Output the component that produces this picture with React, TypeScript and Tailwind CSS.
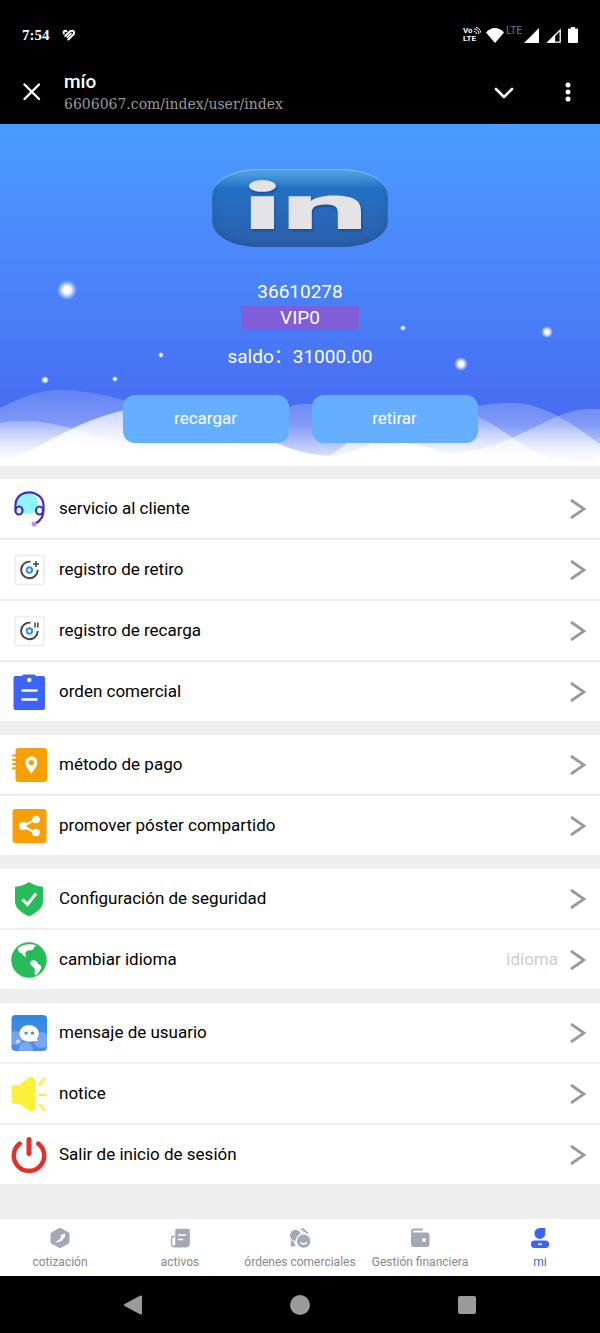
import type { ReactNode } from "react";
import { FaLinkedinIn } from "react-icons/fa";

type Row = {
  label: string;
  icon: ReactNode;
  hint?: string;
};

const groups: Row[][] = [
  [
    { label: "servicio al cliente", icon: <HeadsetIcon /> },
    { label: "registro de retiro", icon: <RecordIcon mark="M25 9v6M22 12h6" /> },
    { label: "registro de recarga", icon: <RecordIcon mark="M24 9.500v5M26.800 9.500v5" /> },
    { label: "orden comercial", icon: <ClipboardIcon /> },
  ],
  [
    { label: "método de pago", icon: <AddressBookIcon /> },
    { label: "promover póster compartido", icon: <ShareIcon /> },
  ],
  [
    { label: "Configuración de seguridad", icon: <ShieldIcon /> },
    { label: "cambiar idioma", icon: <GlobeIcon />, hint: "idioma" },
  ],
  [
    { label: "mensaje de usuario", icon: <MessageIcon /> },
    { label: "notice", icon: <HornIcon /> },
    { label: "Salir de inicio de sesión", icon: <PowerIcon /> },
  ],
];

const tabs = [
  { label: "cotización", icon: <QuoteIcon /> },
  { label: "activos", icon: <AssetsIcon /> },
  { label: "órdenes comerciales", icon: <OrdersIcon /> },
  { label: "Gestión financiera", icon: <WalletIcon /> },
  { label: "mi", icon: <UserIcon />, active: true },
];

export default function App() {
  return (
    <div className="flex min-h-screen flex-col bg-[#eeeeee] font-['Roboto','Noto_Sans_CJK_SC',sans-serif]">
      <StatusBar />
      <TitleBar />
      <Hero />
      <main className="flex flex-1 flex-col gap-[14px] pt-[13px] pb-8">
        {groups.map((rows) => (
          <nav key={rows[0].label} className="flex flex-col gap-[2px]">
            {rows.map((row) => (
              <MenuRow key={row.label} {...row} />
            ))}
          </nav>
        ))}
      </main>
      <TabBar />
      <SystemBar />
    </div>
  );
}

function StatusBar() {
  return (
    <div className="flex h-[61px] items-center justify-between bg-black px-[22px] pt-[9px] text-white">
      <div className="flex items-center gap-3">
        <span className="font-['Liberation_Serif',serif] text-[15px] font-bold">7:54</span>
        <svg viewBox="0 0 14 12" className="h-3 w-[14px]" fill="none" stroke="#fff" strokeWidth="2" strokeLinecap="round">
          <path d="M1.800 4.500C1 2.300 3 1.200 4.500 2.300M3.300 7l4.300-4.300c1.600-1.600 4.600-1.200 4.600 1 0 .9-.5 1.500-1.100 2.100L6.300 10.500" />
          <path d="M5.300 8.300l3.700-3.700" strokeWidth="1.600" />
        </svg>
      </div>
      <div className="flex items-center gap-[7px]">
        <div className="flex items-center">
          <div className="w-[23px] text-[8px] leading-[8px] font-bold">
            <div className="flex items-center">
              Vo
              <svg viewBox="0 0 8 8" className="h-2 w-2" fill="none" stroke="#fff">
                <path d="M1 2c3 0 5 2 5 5M1 4.500c1.500 0 2.500 1 2.500 2.500M3 .5c3 .5 4.500 2.500 4.500 5" />
              </svg>
            </div>
            <div>LTE</div>
          </div>
          <svg viewBox="0 0 18 15" className="h-[15px] w-[18px]" fill="#fff">
            <path d="M0 4.500C5 -1.500 13 -1.500 18 4.500L9 15z" />
          </svg>
          <span className="h-[18px] px-[2px] text-[10px] leading-[10px] font-medium text-[#666]">LTE</span>
          <svg viewBox="0 0 15 15" className="h-[15px] w-[15px]" fill="#fff">
            <path d="M15 0v15H0z" />
          </svg>
        </div>
        <svg viewBox="0 0 15 15" className="h-[15px] w-[15px]" fill="none" stroke="#fff" strokeWidth="1.300">
          <path d="M14.200 2v12.200H2z" />
          <path d="M8.500 8v6H2.500z" fill="#fff" />
        </svg>
        <svg viewBox="0 0 10 16" className="h-4 w-[10px]" fill="#fff">
          <path d="M3 0h4v1.500h2a1 1 0 0 1 1 1V15a1 1 0 0 1-1 1H1a1 1 0 0 1-1-1V2.500a1 1 0 0 1 1-1h2z" />
        </svg>
      </div>
    </div>
  );
}

function TitleBar() {
  return (
    <header className="flex h-[63px] items-center bg-black px-[22px] pb-[2px] text-white">
      <button type="button" aria-label="Cerrar" className="w-[42px]">
        <svg viewBox="0 0 20 20" className="h-5 w-5" fill="none" stroke="#fff" strokeWidth="2.400" strokeLinecap="round">
          <path d="M2.500 2.500l14.500 14.500M17 2.500L2.500 17" />
        </svg>
      </button>
      <div className="min-w-0 flex-1">
        <h1 className="text-[19px] leading-6 font-medium">mío</h1>
        <p className="truncate font-['DejaVu_Serif',serif] text-[14px] leading-5 text-[#999]">6606067.com/index/user/index</p>
      </div>
      <div className="flex items-center gap-[44px]">
        <button type="button" aria-label="Minimizar">
          <svg viewBox="0 0 20 20" className="h-5 w-5" fill="none" stroke="#fff" strokeWidth="2.600" strokeLinecap="round" strokeLinejoin="round">
            <path d="M2 7l8 8 8-8" />
          </svg>
        </button>
        <button type="button" aria-label="Más opciones" className="flex w-5 justify-center">
          <svg viewBox="0 0 6 20" className="h-5 w-[6px]" fill="#fff">
            <circle cx="3" cy="3" r="2.500" />
            <circle cx="3" cy="10" r="2.500" />
            <circle cx="3" cy="17" r="2.500" />
          </svg>
        </button>
      </div>
    </header>
  );
}

function Hero() {
  return (
    <section className="relative flex flex-col items-center pt-[45px] pb-[23px] text-[19px] text-white">
      <HeroBackdrop />
      <div className="relative flex h-[78px] w-[176px] items-center justify-center rounded-[46px/26px] bg-linear-to-b from-[#58a9e4] via-[#2370c4] via-25% to-[#2c5fac] pl-[9px] shadow-[inset_0_1px_1px_#79c3ee,inset_0_-4px_6px_#2a5a9e]">
        <FaLinkedinIn
          preserveAspectRatio="none"
          className="h-[56px] w-[112px] text-[#e3e3e5] drop-shadow-[1px_2px_1px_#174f91]"
          aria-label="LinkedIn"
        />
      </div>
      <p className="relative mt-[33px] leading-6">36610278</p>
      <p className="relative mt-[2px] w-[118px] rounded-[3px] bg-[#805ed8] text-center leading-6">VIP0</p>
      <p className="relative mt-[15px] leading-6" lang="zh-CN">
        saldo：31000.00
      </p>
      <div className="relative mt-[26px] flex gap-[23px] text-[17px]">
        <button type="button" className="h-12 w-[166px] rounded-xl bg-[#66aeff]">
          recargar
        </button>
        <button type="button" className="h-12 w-[166px] rounded-xl bg-[#66aeff]">
          retirar
        </button>
      </div>
    </section>
  );
}

const stars = [
  { x: 67, y: 166, r: 10 },
  { x: 547, y: 208, r: 6 },
  { x: 461, y: 240, r: 7 },
  { x: 403, y: 204, r: 3 },
  { x: 161, y: 231, r: 3 },
  { x: 45, y: 256, r: 4 },
  { x: 115, y: 255, r: 3 },
];

function HeroBackdrop() {
  return (
    <svg viewBox="0 0 600 342" preserveAspectRatio="none" className="absolute inset-0 h-full w-full" aria-hidden="true">
      <defs>
        <linearGradient id="sky" x1="0" y1="0" x2="0" y2="1">
          <stop offset="0" stopColor="#4b9cff" />
          <stop offset="0.450" stopColor="#4a84fa" />
          <stop offset="0.800" stopColor="#486ff3" />
          <stop offset="1" stopColor="#4869f0" />
        </linearGradient>
        <linearGradient id="mist" gradientUnits="userSpaceOnUse" x1="0" y1="264" x2="0" y2="336">
          <stop offset="0" stopColor="#fff" stopOpacity="0.130" />
          <stop offset="0.500" stopColor="#fff" stopOpacity="0.300" />
          <stop offset="1" stopColor="#fff" stopOpacity="0.850" />
        </linearGradient>
        <linearGradient id="snow" gradientUnits="userSpaceOnUse" x1="0" y1="278" x2="0" y2="330">
          <stop offset="0" stopColor="#fff" stopOpacity="0.550" />
          <stop offset="0.750" stopColor="#fff" stopOpacity="0.900" />
          <stop offset="1" stopColor="#fff" />
        </linearGradient>
        <radialGradient id="star">
          <stop offset="0.350" stopColor="#fff" />
          <stop offset="0.650" stopColor="#fff" stopOpacity="0.500" />
          <stop offset="1" stopColor="#fff" stopOpacity="0" />
        </radialGradient>
      </defs>
      <rect width="600" height="342" fill="url(#sky)" />
      <path fill="url(#mist)" d="M0 284C20 274 38 266 59 266C82 266 104 271 124 276C165 288 235 335 300 335C370 338 420 279 513 279C545 279 575 302 600 320V342H0Z" />
      <path fill="url(#mist)" d="M0 299C9 297 18 297 27 297C80 298 125 331 185 331C240 331 258 280 306 280C350 280 380 330 451 329C510 328 550 285 589 285H600V342H0Z" />
      <path fill="url(#mist)" d="M329 332C352 319 380 284 430 280C500 284 520 338 574 338C585 338 593 336 600 332V342H329Z" />
      <path fill="url(#snow)" d="M0 336C45 330 80 282 172 281C235 284 270 332 335 332C370 333 385 319 405 319C430 319 445 340 540 334C560 334 580 339 600 336V342H0Z" />
      {stars.map((s) => (
        <circle key={s.x} cx={s.x} cy={s.y} r={s.r} fill="url(#star)" />
      ))}
    </svg>
  );
}

function MenuRow({ label, icon, hint }: Row) {
  return (
    <a href="#" className="flex h-[59px] items-center gap-3 bg-white pr-[14px] pl-[11px] text-[17px] text-black">
      {icon}
      <span className="flex-1">{label}</span>
      {hint && <span className="text-[#cccccc]">{hint}</span>}
      <svg viewBox="0 0 16 20" className="h-5 w-4" fill="none" stroke="#999" strokeWidth="2.800">
        <path d="M1 1l13 9-13 9" />
      </svg>
    </a>
  );
}

function TabBar() {
  return (
    <nav className="grid h-[57px] grid-cols-5 bg-white">
      {tabs.map((t) => (
        <a
          key={t.label}
          href="#"
          className={
            t.active
              ? "flex flex-col items-center gap-[6px] pt-[9px] text-[12px] leading-4 whitespace-nowrap text-[#3c64fb]"
              : "flex flex-col items-center gap-[6px] pt-[9px] text-[12px] leading-4 whitespace-nowrap text-[#888]"
          }
        >
          {t.icon}
          {t.label}
        </a>
      ))}
    </nav>
  );
}

function SystemBar() {
  return (
    <div className="grid h-[57px] grid-cols-3 place-items-center bg-black px-[50px]">
      <button type="button" aria-label="Atrás">
        <svg viewBox="0 0 20 20" className="h-5 w-5" fill="#9b9b9b" stroke="#9b9b9b" strokeWidth="2" strokeLinejoin="round">
          <path d="M2 10L18 1.500v17z" />
        </svg>
      </button>
      <button type="button" aria-label="Inicio" className="h-5 w-5 rounded-full bg-[#9b9b9b]" />
      <button type="button" aria-label="Recientes" className="h-[18px] w-[18px] rounded-[2px] bg-[#9b9b9b]" />
    </div>
  );
}

function HeadsetIcon() {
  return (
    <svg viewBox="0 0 36 36" className="h-9 w-9" fill="none" strokeLinecap="round">
      <circle cx="16.500" cy="12.500" r="10.500" fill="#8df5f5" />
      <path d="M4.500 19v-4.500C4.500 6.500 10.500 1.300 18 1.300S32.500 6.500 32.500 14.500V19c0 7-2.500 10.500-7.500 13" stroke="#3a2fc4" strokeWidth="2.200" />
      <ellipse cx="8" cy="19.500" rx="3.500" ry="4" fill="#d5f8fb" stroke="#3a2fc4" strokeWidth="2.200" />
      <ellipse cx="28.500" cy="19.500" rx="3.500" ry="4" fill="#fff" stroke="#3a2fc4" strokeWidth="2.200" />
      <circle cx="23" cy="33" r="2.500" fill="#c58bf2" />
    </svg>
  );
}

function RecordIcon({ mark }: { mark: string }) {
  return (
    <svg viewBox="0 0 36 36" className="h-9 w-9" fill="none">
      <rect x="4" y="3.500" width="29" height="29" rx="2" fill="#fff" stroke="#ececec" strokeWidth="1.500" />
      <path d="M19.500 9.700A8.300 8.300 0 1 0 26.700 18" stroke="#444" strokeWidth="1.900" />
      <circle cx="18.400" cy="18" r="2.700" stroke="#2a93ee" strokeWidth="2" />
      <path d={mark} stroke="#444" strokeWidth="1.500" />
    </svg>
  );
}

function ClipboardIcon() {
  return (
    <svg viewBox="0 0 36 36" className="h-9 w-9">
      <path fill="#3c64fb" d="M4.500 2H11l1.500-1.500h11L25 2h7a2 2 0 0 1 2 2v30a2 2 0 0 1-2 2H4.500a2 2 0 0 1-2-2V4a2 2 0 0 1 2-2z" />
      <circle cx="18.300" cy="6" r="2.200" fill="#fff" />
      <path stroke="#fff" strokeWidth="2.500" strokeLinecap="round" d="M11.500 16.500h14M11.500 25.500h14" />
    </svg>
  );
}

function AddressBookIcon() {
  return (
    <svg viewBox="0 0 36 36" className="h-9 w-9">
      <rect x="4.500" y="1" width="31.500" height="34" rx="3" fill="#f99f06" />
      <path stroke="#f99f06" strokeWidth="2.200" strokeLinecap="round" d="M2 8.500h4M2 12.800h4M2 17h4M2 21.300h4" />
      <path fill="#fff" d="M20.300 9.500c-3.500 0-6 2.600-6 5.900 0 3.800 3.500 8 6 11 2.500-3 6-7.200 6-11 0-3.300-2.500-5.900-6-5.900z" />
      <circle cx="20.300" cy="15.500" r="2.600" fill="#f99f06" />
    </svg>
  );
}

function ShareIcon() {
  return (
    <svg viewBox="0 0 36 36" className="h-9 w-9">
      <rect x="1.500" y="1" width="34" height="34" rx="3" fill="#f99f06" />
      <path d="M25 11.500L11.500 18 25 25" fill="none" stroke="#fff" strokeWidth="2.200" />
      <g fill="#fff">
        <circle cx="12" cy="18" r="4" />
        <circle cx="25" cy="11.500" r="3.800" />
        <circle cx="25" cy="24.500" r="3.800" />
      </g>
    </svg>
  );
}

function ShieldIcon() {
  return (
    <svg viewBox="0 0 36 36" className="h-9 w-9">
      <path fill="#27bb5a" d="M18 1c4 2.800 8.500 4.300 14 4.800v14C32 28 25 32 18 35.500 11 32 4 28 4 19.800v-14C9.500 5.300 14 3.800 18 1z" />
      <path d="M11.500 18.500l5 5L25 12.500" fill="none" stroke="#fff" strokeWidth="3" />
    </svg>
  );
}

function GlobeIcon() {
  return (
    <svg viewBox="0 0 36 36" className="h-9 w-9">
      <circle cx="18" cy="18" r="17.800" fill="#27bb5a" />
      <path fill="#fff" d="M7 6c4-3.500 12-5 18.500-2.800-1.500 1-2.500 1.800-3 3.500-.5 1.500-2.500 1.500-4.500 1.500-1.500 0-3 1.500-4 3 1 1.500 1.500 3 .5 3.500-2.500-.5-2.500-3.500-4.500-3.800C7.500 10.700 7 8.500 7 6z" />
      <path fill="#fff" d="M19 20.500c1-2 4-2.800 6-1.500 1.500 1.500 1.500 3 4 4 2 1.500 1.500 3.500 0 5-1 2.500-2.500 5-5 5.500-1-2 .5-5-.5-7-1.500-2-4.500-3-4.500-6z" />
    </svg>
  );
}

function MessageIcon() {
  return (
    <svg viewBox="0 0 36 36" className="h-9 w-9">
      <defs>
        <linearGradient id="msg" x1="0" y1="0" x2="0" y2="1">
          <stop offset="0" stopColor="#2e89df" />
          <stop offset="1" stopColor="#5489e9" />
        </linearGradient>
        <clipPath id="msg-clip">
          <rect x="0.500" width="35.500" height="36" rx="4" />
        </clipPath>
      </defs>
      <g clipPath="url(#msg-clip)">
        <rect width="36" height="36" fill="url(#msg)" />
        <g fill="#fff" fillOpacity="0.250">
          <circle cx="5" cy="23" r="7" />
          <circle cx="30" cy="25" r="8" />
          <circle cx="15" cy="34" r="7" />
          <circle cx="7" cy="26.500" r="2" fillOpacity="0.600" />
        </g>
        <path fill="#fff" d="M18 10c-5.500 0-9.500 3.700-9.500 8.300s4 8.300 9.500 8.300c2 0 3.500-.2 5-.6H27c-.8-.7-1.200-1.600-1.200-2.400 1.300-1.400 2-3.200 2-5.300C27.800 13.700 23.500 10 18 10z" />
        <circle cx="15" cy="18" r="1.600" fill="#3f83df" />
        <circle cx="21.500" cy="18" r="1.600" fill="#3f83df" />
      </g>
    </svg>
  );
}

function HornIcon() {
  return (
    <svg viewBox="0 0 36 36" className="h-9 w-9">
      <path fill="#fbf03a" d="M3 9h5.500C12 6 15 3 18.500 1c2-1 5.500.5 5.500 3.500v27.500c0 3-3 4.500-5.500 3C15 33 12 29.500 8.500 28H3c-1.500 0-2.500-1-2.500-2.500v-14C.5 10 1.500 9 3 9z" />
      <path stroke="#fbf03a" strokeWidth="2.500" strokeLinecap="round" d="M28.800 8.500l4.500-5.500M28.500 18.700h6M29 29l4 5" />
    </svg>
  );
}

function PowerIcon() {
  return (
    <svg viewBox="0 0 36 36" className="h-9 w-9" fill="none" stroke="#e3302d" strokeLinecap="round">
      <path strokeWidth="4.500" d="M8.700 6.600a15.200 15.200 0 1 0 18.600 0" />
      <path strokeWidth="5" d="M18 2.500v14" />
    </svg>
  );
}

function QuoteIcon() {
  return (
    <svg viewBox="0 0 20 20" className="h-5 w-5">
      <path fill="#a2a8b8" d="M8.500.4a3 3 0 0 1 3 0L18 4a3 3 0 0 1 1.500 2.500v7A3 3 0 0 1 18 16l-6.500 3.600a3 3 0 0 1-3 0L2 16a3 3 0 0 1-1.500-2.500v-7A3 3 0 0 1 2 4z" />
      <path fill="#fff" d="M5 14.300c5 .2 8.200-1.700 9-5l1 .5V5.300L9.800 7.700l1.400.8c-.6 2.300-2.800 4.300-6.200 5.800z" />
    </svg>
  );
}

function AssetsIcon() {
  return (
    <svg viewBox="0 0 20 20" className="h-5 w-5">
      <path d="M5 8.500H3A1.500 1.500 0 0 0 1.500 10v6.500a2 2 0 0 0 4 0" fill="none" stroke="#a2a8b8" strokeWidth="1.300" />
      <path fill="#a2a8b8" d="M7 .8h11A1.800 1.800 0 0 1 19.800 2.600v13a4 4 0 0 1-4 4H3.500c1.300-.7 1.800-1.700 1.800-3.200V2.500C5.300 1.500 6 .8 7 .8z" />
      <path stroke="#fff" strokeWidth="1.600" d="M8 7h8M8 11.500h5" />
    </svg>
  );
}

function OrdersIcon() {
  return (
    <svg viewBox="0 0 24 22" className="h-5 w-[22px]">
      <g fill="#a2a8b8">
        <circle cx="7" cy="8" r="6" />
        <path d="M2 13.500c1 .8 2 1.200 3.500 1.300 0 2 .8 3.700 2 5L2 20.500z" />
        <circle cx="16" cy="14.500" r="8.800" fill="#fff" />
        <circle cx="16" cy="14.500" r="7.300" />
      </g>
      <path d="M13 2.200c2-1.500 3.200-1 4 .5M15.500 3.500c2.500-.3 4 .7 5.300 2.500" fill="none" stroke="#a2a8b8" strokeWidth="1.800" />
      <path d="M12.500 15.500c1.500 3 5.500 3 7 0" fill="none" stroke="#fff" strokeWidth="1.700" />
    </svg>
  );
}

function WalletIcon() {
  return (
    <svg viewBox="0 0 20 20" className="h-5 w-5">
      <path d="M2 6V3.200A1.700 1.700 0 0 1 3.700 1.500h8.500" fill="none" stroke="#a2a8b8" strokeWidth="1.800" strokeLinecap="round" />
      <path fill="#a2a8b8" d="M1 4.500h15.500a3 3 0 0 1 3 3V16a3 3 0 0 1-3 3H4a3 3 0 0 1-3-3z" />
      <circle cx="14" cy="12" r="2" fill="#fff" />
    </svg>
  );
}

function UserIcon() {
  return (
    <svg viewBox="0 0 20 20" className="h-5 w-5">
      <path fill="#3c64fb" d="M10 0h5.300v6.300A5.500 5.500 0 1 1 10 0z" />
      <rect x="1" y="12.500" width="18" height="7.500" rx="3.500" fill="#3c64fb" />
      <path d="M8 16.300h4" stroke="#fff" strokeWidth="1.600" />
    </svg>
  );
}
